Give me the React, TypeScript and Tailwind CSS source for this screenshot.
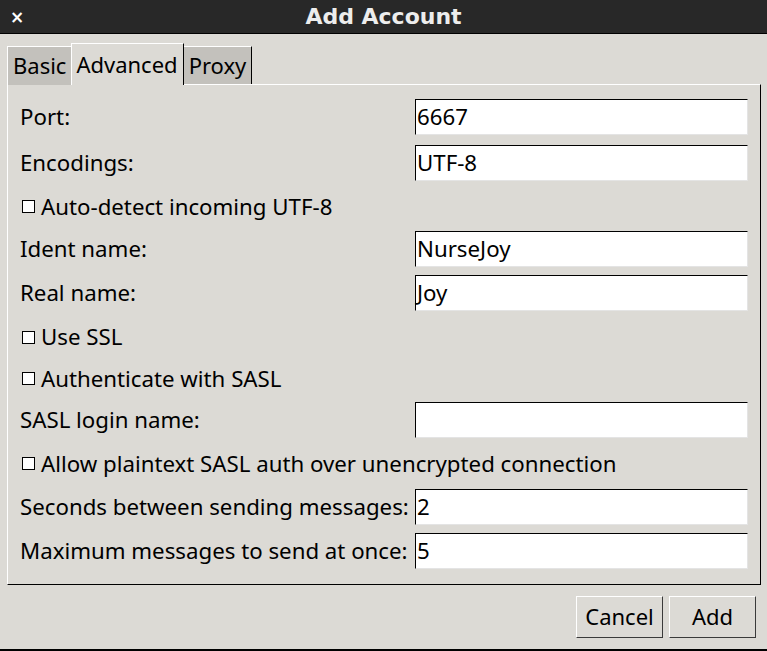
const font = { fontFamily: '"Noto Sans", "DejaVu Sans", sans-serif' };

type Row =
  | { kind: 'entry'; label: string; value: string; h: string }
  | { kind: 'check'; label: string; h: string };

const rows: Row[] = [
  { kind: 'entry', label: 'Port:', value: '6667', h: 'h-[46px]' },
  { kind: 'entry', label: 'Encodings:', value: 'UTF-8', h: 'h-[45px]' },
  { kind: 'check', label: 'Auto-detect incoming UTF-8', h: 'h-[43px]' },
  { kind: 'entry', label: 'Ident name:', value: 'NurseJoy', h: 'h-[42px]' },
  { kind: 'entry', label: 'Real name:', value: 'Joy', h: 'h-[46px]' },
  { kind: 'check', label: 'Use SSL', h: 'h-[42px]' },
  { kind: 'check', label: 'Authenticate with SASL', h: 'h-[41px]' },
  { kind: 'entry', label: 'SASL login name:', value: '', h: 'h-[42px]' },
  { kind: 'check', label: 'Allow plaintext SASL auth over unencrypted connection', h: 'h-[45px]' },
  { kind: 'entry', label: 'Seconds between sending messages:', value: '2', h: 'h-[41px]' },
  { kind: 'entry', label: 'Maximum messages to send at once:', value: '5', h: 'h-[48px]' },
];

const Entry = ({ value }: { value: string }) => (
  <div className="w-[333px] h-[36px] shrink-0 bg-white border border-t-black border-l-black border-r-[#e4e4e4] border-b-[#e4e4e4] flex items-center pl-px text-[22.25px] text-black">
    {value}
  </div>
);

export default function App() {
  return (
    <div className="w-[767px] h-[651px] bg-[#dcdad5] flex flex-col text-black border-b-2 border-black" style={font}>
      <div className="h-[34px] shrink-0 bg-[#282828] border-b border-black flex items-center relative">
        <span className="absolute left-[10px] top-[5px] text-white text-[17px] font-bold" style={{ fontFamily: '"DejaVu Sans", sans-serif' }}>
          ×
        </span>
        <div className="flex-1 text-center text-[#ededed] text-[22px] font-bold" style={{ fontFamily: '"DejaVu Sans", sans-serif' }}>
          Add Account
        </div>
      </div>

      <div className="flex-1 flex flex-col pt-[9px] pl-[7px] pr-[6px]">
        <div className="flex items-end text-[22px] leading-none relative z-10 -mb-px">
          <div className="h-[39px] px-[5px] pb-[2px] bg-[#c3c1bc] border-t border-l border-white flex items-center">Basic</div>
          <div className="h-[42px] pl-[4px] pr-[5px] pb-[2px] bg-[#dcdad5] border-t border-l border-white border-r border-r-black flex items-center">Advanced</div>
          <div className="h-[38px] px-[5px] pb-[2px] bg-[#c3c1bc] border-t border-white border-r border-r-black flex items-center mb-px">Proxy</div>
        </div>

        <div className="border border-t-white border-l-white border-r-black border-b-black pt-[9px] pb-[9px] pl-[12px] pr-[12px]">
          {rows.map((row) =>
            row.kind === 'entry' ? (
              <div key={row.label} className={`${row.h} flex items-center justify-between`}>
                <span className="text-[22.25px] whitespace-nowrap">{row.label}</span>
                <Entry value={row.value} />
              </div>
            ) : (
              <div key={row.label} className={`${row.h} flex items-center`}>
                <span className="w-[13px] h-[13px] shrink-0 ml-[2px] mr-[6px] border border-black bg-white" />
                <span className="text-[22.25px] whitespace-nowrap">{row.label}</span>
              </div>
            )
          )}
        </div>

        <div className="flex justify-end gap-[6px] mt-[11px] pr-[5px]">
          <button className="w-[87px] h-[42px] pb-[2px] border border-t-white border-l-white border-r-[#3a3a3a] border-b-[#3a3a3a] text-[22px] bg-[#dcdad5]">
            Cancel
          </button>
          <button className="w-[87px] h-[42px] pb-[2px] border border-t-white border-l-white border-r-[#3a3a3a] border-b-[#3a3a3a] text-[22px] bg-[#dcdad5]">
            Add
          </button>
        </div>
      </div>
    </div>
  );
}
